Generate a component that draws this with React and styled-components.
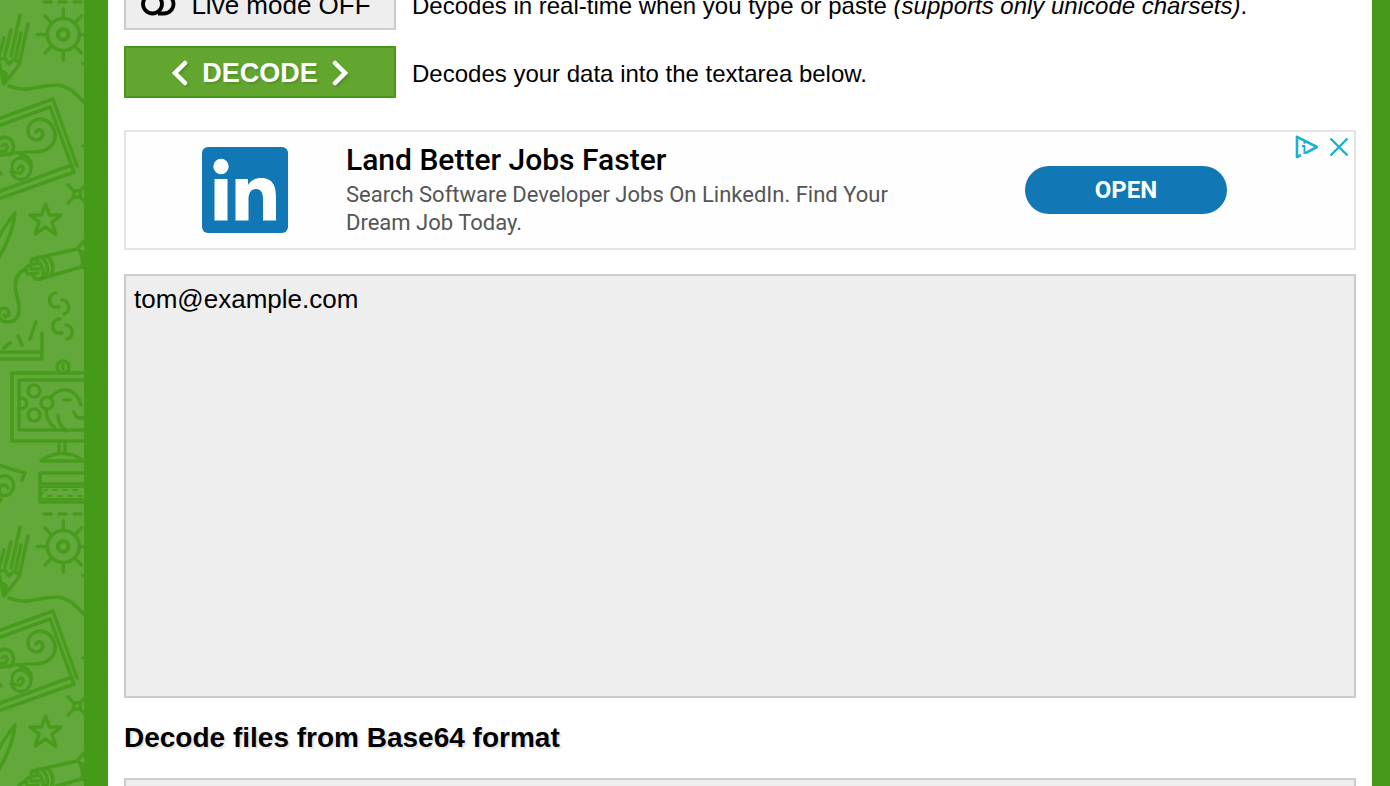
import React from "react";
import styled, { createGlobalStyle } from "styled-components";

const GlobalStyle = createGlobalStyle`
  *, *::before, *::after { box-sizing: border-box; }
  html, body { margin: 0; padding: 0; }
  body {
    background: #469a1a;
    color: #000;
    font-family: "Liberation Sans", Arial, Helvetica, sans-serif;
  }
`;

const Page = styled.div`
  display: flex;
  height: 100vh;
  overflow: hidden;
`;

const Doodles = styled.svg`
  flex: none;
  width: 84px;
  height: 100%;
  background: #62a83b;
`;

const Content = styled.main`
  flex: 1;
  min-width: 0;
  display: flex;
  flex-direction: column;
  padding: 0 16px;
  margin: 0 18px 0 24px;
  background: #fff;
`;

const Actions = styled.div`
  display: flex;
  flex-direction: column;
  gap: 16px;
  margin-top: -22px;
`;

const ActionRow = styled.div`
  display: flex;
  align-items: center;
  gap: 16px;
  font-size: 24px;
  line-height: 28px;
`;

const ActionText = styled.p`
  margin: 0;
  padding-top: 4px;
`;

const Button = styled.button`
  flex: none;
  display: flex;
  align-items: center;
  justify-content: center;
  gap: 14px;
  width: 272px;
  height: 52px;
  padding: ${(p) => (p.$primary ? "2px 0 0" : "2px 8px 0 0")};
  border: 2px solid ${(p) => (p.$primary ? "#469a1a" : "#ccc")};
  background: ${(p) => (p.$primary ? "#62a62f" : "#eee")};
  color: ${(p) => (p.$primary ? "#fff" : "#000")};
  font-family: inherit;
  font-size: ${(p) => (p.$primary ? "27px" : "26px")};
  font-weight: ${(p) => (p.$primary ? 700 : 400)};
  line-height: 32px;
  text-shadow: ${(p) => (p.$primary ? "2px 2px 2px rgba(0, 0, 0, 0.12)" : "none")};
  cursor: pointer;

  svg {
    flex: none;
    filter: ${(p) => (p.$primary ? "drop-shadow(2px 2px 1px rgba(0, 0, 0, 0.12))" : "none")};
  }
`;

const Ad = styled.aside`
  position: relative;
  flex: none;
  display: flex;
  align-items: center;
  height: 120px;
  margin: 32px 0 24px;
  padding: 0 127px 0 76px;
  border: 2px solid #e5e5e5;
  background: #fefefe;
  font-family: Roboto, "Liberation Sans", sans-serif;
`;

const AdCopy = styled.div`
  flex: 1;
  margin-left: 58px;
`;

const AdTitle = styled.h2`
  margin: 0;
  font-size: 30px;
  font-weight: 500;
  line-height: 34px;
`;

const AdText = styled.p`
  max-width: 560px;
  margin: 4px 0 0;
  color: #555;
  font-size: 22px;
  line-height: 28px;
`;

const OpenButton = styled.button`
  flex: none;
  width: 202px;
  height: 48px;
  padding: 0;
  border: 0;
  border-radius: 24px;
  background: #1178b5;
  color: #fff;
  font-family: inherit;
  font-size: 24px;
  font-weight: 700;
  cursor: pointer;
`;

const AdControls = styled.div`
  position: absolute;
  top: 2px;
  right: 4px;
  display: flex;
  gap: 8px;
`;

const IconButton = styled.button`
  width: 24px;
  height: 26px;
  padding: 0;
  border: 0;
  background: none;
  cursor: pointer;

  svg { display: block; }
`;

const Output = styled.textarea`
  flex: none;
  display: block;
  width: 100%;
  height: 424px;
  margin: 0;
  padding: 8px;
  border: 2px solid #ccc;
  border-radius: 0;
  outline: none;
  resize: none;
  background: #eee;
  color: #000;
  font-family: inherit;
  font-size: 26px;
  line-height: 30px;
`;

const Heading = styled.h2`
  margin: 24px 0;
  font-size: 28px;
  font-weight: 700;
  line-height: 32px;
  text-shadow: 2px 2px 2px rgba(0, 0, 0, 0.12);
`;

const DropZone = styled.section`
  flex: none;
  height: 120px;
  border: 2px solid #ccc;
  background: #eee;
`;

function Sidebar() {
  return (
    <Doodles aria-hidden="true">
      <defs>
        <pattern id="doodles" width="84" height="512" patternUnits="userSpaceOnUse">
          <g fill="none" stroke="#469a1a" strokeWidth="3.6" strokeOpacity="0.9" strokeLinecap="round" strokeLinejoin="round">
            <path d="M44 2h7M59 2h7M74 2h7" />
            {/* sun */}
            <circle cx="63.3" cy="34.5" r="16" />
            <circle cx="63.3" cy="34.5" r="5.3" strokeWidth="4.4" />
            <path d="M63.3 9v8M63.3 52v8M37.5 34.5h8M80 34.5h6M45 16l6 6M81.500 16l-6 6M45 53l6-6M81.500 53l-6-6M83 63.500h2M83 146h2" />
            {/* pencil */}
            <path d="M20 15 11 56M28 24l-9 41M11 30 5 55M4 38l-6 22M-1 62l5 22 15-19M-1 60l6-2 4 6 5-5 6 4M5 82l1-8-4-3M21 33l-5 23" />
            <path d="M9 86c21 8 31-2 49-1 12 1 20 12 28 19" />
            {/* framed scrolls */}
            <path d="M-2 119 53 99l24 67M-2 126 50 107l24 65-76 27M-2 192 72 165" />
            <path d="M36 132c3-5 9 0 6 5-4 6-14 2-14-6 0-9 9-14 17-11 10 4 13 17 7 25-6 7-14 7-24 7-15 0-20 2-32 4" />
            <path d="M2 146c3-4 7 0 4 4-4 4-10 0-9-6 1-7 9-9 14-4 4 5 3 11-1 15" />
            <path d="M18 169c1-5 7-3 5 1-2 5-11 4-11-3 0-8 8-11 14-7 7 5 6 14 0 18-5 3-12 1-15-6" strokeWidth="3.2" />
            <path d="M20 155c8 0 12 6 11 12M-1 172l2 2" />
            {/* satellite */}
            <circle cx="77" cy="194" r="3.500" />
            <path d="m74 191-6-6M74 197l-6 6M80 191l6-6M80 197l6 6" />
            {/* star */}
            <path d="m45.500 204 4 11h11.500l-9 7 3.500 12-10-7-10 7 3.500-12-9-7H41.500z" />
            <path d="M-2 239C4 226 11 218 15 213c-2 17-9 33-17 46" />
            {/* paint tube */}
            <path d="m32 259 45-10c5 1 7 16 4 18l-41 12M78 248l8-9M82 252l4 6M82 267l4 2" />
            <path d="M31 262c1-5 8-2 11 5s1 13-4 12M38 257c9 0 12 14 7 20M45 256c7 1 10 13 6 19M28 266l11-3M28 274l10-1M28 266c-3 2-2 7 0 8M31 269h8M33 274c0 3 2 5 5 5" />
            <path d="M26 269c-10 4-13 13-9 27 5 18 1 26-10 26-6-1-9-4-9-8M-1 314c1-8 10-7 10-1 0 4-5 5-5 2" />
            {/* chain links */}
            <path d="M56 293c-7 0-9 11-2 14l5 0M62 300c8 1 9 12 2 14M60 319c-8 0-10 11-3 14l5 0M66 325c8 2 8 12 1 14" />
            {/* pen tray */}
            <path d="M36 322l-6 17M18 336l4 9M10 343l-6 5M42 333v26H-2M-2 352h44" />
            {/* monitor */}
            <circle cx="63" cy="367" r="6" />
            <path d="M63 365v4M86 373H12v68h74M86 380H19v50h67M59 442v12M65 442v12M41 461c12-10 31-10 42 0z" />
            <circle cx="34" cy="391" r="6" />
            <circle cx="47" cy="403" r="6" />
            <circle cx="34" cy="415" r="6" />
            <path d="M20 398c9-1 9 11 0 11M51 397c12-13 26-7 30 8M46 410c0 10 6 15 10 20M58 415c0 8 4 12 8 16M64 400h6M74 412c2 7 7 7 10 5" />
            {/* scroll pen */}
            <path d="m-2 465 27 8-3 7M-2 478c11-7 19 4 14 13-4 7-13 6-13-1 0-6 8-6 9-2M1 499l-3 5" />
            {/* keyboard */}
            <path d="M86 473H40v29h46M41 484h43" />
            <path d="M44 490h3M53 490h4M63 490h4M73 490h4M48 496h4M58 496h4M68 496h4M78 496h4M41 487h43M41 493h2M41 499h43" strokeWidth="2.200" />
          </g>
        </pattern>
      </defs>
      <rect width="100%" height="100%" fill="url(#doodles)" />
    </Doodles>
  );
}

function Chevron({ d }) {
  return (
    <svg width="16" height="26" viewBox="0 0 16 26" aria-hidden="true">
      <path d={d} fill="none" stroke="#fff" strokeWidth="4.500" strokeLinecap="round" />
    </svg>
  );
}

export default function App() {
  return (
    <>
      <GlobalStyle />
      <Page>
        <Sidebar />
        <Content>
          <Actions>
            <ActionRow>
              <Button type="button">
                <svg width="36" height="24" viewBox="0 0 36 24" fill="none" stroke="#000" strokeWidth="3.800" aria-hidden="true">
                  <circle cx="11.500" cy="11" r="9.500" />
                  <path d="M17 1.500h6a9.500 9.500 0 0 1 0 19h-6" />
                </svg>
                Live mode OFF
              </Button>
              <ActionText>
                Decodes in real-time when you type or paste <em>(supports only unicode charsets)</em>.
              </ActionText>
            </ActionRow>
            <ActionRow>
              <Button type="button" $primary>
                <Chevron d="M13 3 3 13l10 10" />
                DECODE
                <Chevron d="m3 3 10 10-10 10" />
              </Button>
              <ActionText>Decodes your data into the textarea below.</ActionText>
            </ActionRow>
          </Actions>

          <Ad>
            <svg width="86" height="86" viewBox="0 0 86 86" role="img" aria-label="LinkedIn">
              <rect width="86" height="86" rx="6" fill="#1178b5" />
              <circle cx="19" cy="19.500" r="7.700" fill="#fff" />
              <path
                fill="#fff"
                d="M12.500 32h13v41.500h-13zM33.500 32H46v6c2-4 7-7 12.500-7C71 31 74 39 74 50v23.500H61V53c0-6-1-11-7-11s-7.500 5-7.500 11v20.500h-13z"
              />
            </svg>
            <AdCopy>
              <AdTitle>Land Better Jobs Faster</AdTitle>
              <AdText>Search Software Developer Jobs On LinkedIn. Find Your Dream Job Today.</AdText>
            </AdCopy>
            <OpenButton type="button">OPEN</OpenButton>
            <AdControls>
              <IconButton type="button" aria-label="Ad information">
                <svg width="24" height="26" viewBox="0 0 24 26" fill="none" stroke="#1db0cc" strokeLinejoin="round">
                  <path d="M7 21 3 23.200V2.800L23 13 11.500 19.200" strokeWidth="2.600" />
                  <path d="M8 12h2.500v8M10.500 7.500v2.200" strokeWidth="2" />
                </svg>
              </IconButton>
              <IconButton type="button" aria-label="Close ad">
                <svg width="24" height="26" viewBox="0 0 24 26" fill="none" stroke="#1db0cc" strokeWidth="2.400">
                  <path d="m4.500 4.500 17 17M21.500 4.500l-17 17" />
                </svg>
              </IconButton>
            </AdControls>
          </Ad>

          <Output aria-label="Decoded text" readOnly value="tom@example.com" />
          <Heading>Decode files from Base64 format</Heading>
          <DropZone aria-label="File decoder" />
        </Content>
      </Page>
    </>
  );
}
